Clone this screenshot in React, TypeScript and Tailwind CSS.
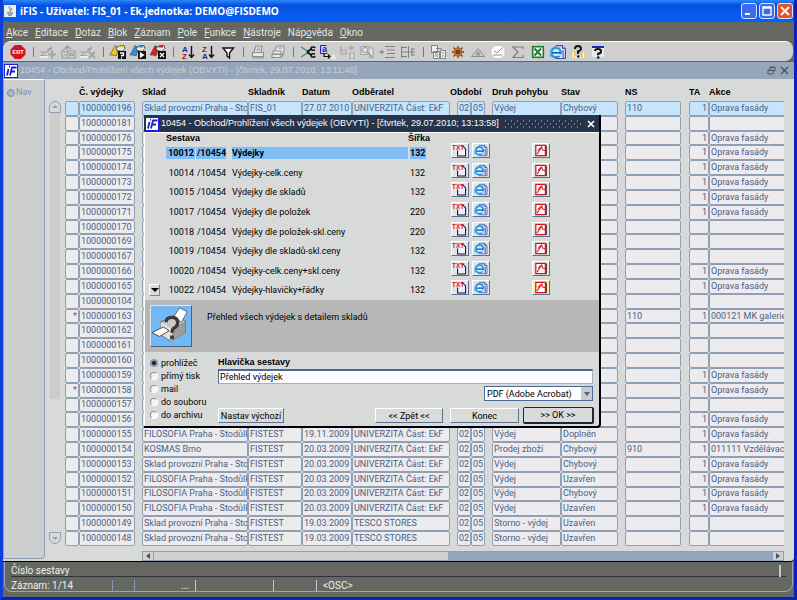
import { useState } from "react";
import type { ReactNode } from "react";

type Row = {
  id: string;
  mark?: string;
  store?: string;
  keeper?: string;
  date?: string;
  customer?: string;
  month?: string;
  year?: string;
  kind?: string;
  state?: string;
  ns?: string;
  ta?: string;
  action?: string;
};

const repair = { ta: "1", action: "Oprava fasády" };
const period = { month: "02", year: "05" };
const filosofia = {
  store: "FILOSOFIA Praha - Stodůlk",
  keeper: "FISTEST",
  customer: "UNIVERZITA Část: EkF",
  ...period,
};
const warehouse = {
  store: "Sklad provozní Praha - Stod",
  keeper: "FISTEST",
  customer: "UNIVERZITA Část: EkF",
  ...period,
};

const rows: Row[] = [
  { id: "1000000196", ...warehouse, keeper: "FIS_01", date: "27.07.2010", kind: "Výdej", state: "Chybový", ns: "110", ...repair },
  { id: "1000000181" },
  { id: "1000000176", ...repair },
  { id: "1000000175", ...repair },
  { id: "1000000174", ...repair },
  { id: "1000000173", ...repair },
  { id: "1000000172", ...repair },
  { id: "1000000171", ...repair },
  { id: "1000000170" },
  { id: "1000000169" },
  { id: "1000000167" },
  { id: "1000000166", ...repair },
  { id: "1000000165", ...repair },
  { id: "1000000104" },
  { id: "1000000163", mark: "*", ns: "110", ta: "1", action: "000121 MK galerie" },
  { id: "1000000162" },
  { id: "1000000161" },
  { id: "1000000160" },
  { id: "1000000159", ...repair },
  { id: "1000000158", mark: "*", ...repair },
  { id: "1000000157" },
  { id: "1000000156", ...repair },
  { id: "1000000155", ...filosofia, date: "19.11.2009", kind: "Výdej", state: "Doplněn", ...repair },
  { id: "1000000154", ...warehouse, store: "KOSMAS Brno", date: "20.03.2009", kind: "Prodej zboží", state: "Chybový", ns: "910", ta: "1", action: "011111 Vzdělávací" },
  { id: "1000000153", ...warehouse, date: "20.03.2009", kind: "Výdej", state: "Chybový", ...repair },
  { id: "1000000152", ...filosofia, date: "20.03.2009", kind: "Výdej", state: "Uzavřen", ...repair },
  { id: "1000000151", ...filosofia, date: "20.03.2009", kind: "Výdej", state: "Chybový", ...repair },
  { id: "1000000150", ...filosofia, date: "20.03.2009", kind: "Výdej", state: "Uzavřen", ...repair },
  { id: "1000000149", ...warehouse, customer: "TESCO STORES", date: "19.03.2009", kind: "Storno - výdej", state: "Uzavřen" },
  { id: "1000000148", ...warehouse, customer: "TESCO STORES", date: "19.03.2009", kind: "Storno - výdej", state: "Uzavřen" },
];

const reports = [
  { code: "10012", name: "Výdejky", width: 132 },
  { code: "10014", name: "Výdejky-celk.ceny", width: 132 },
  { code: "10015", name: "Výdejky dle skladů", width: 132 },
  { code: "10017", name: "Výdejky dle položek", width: 220 },
  { code: "10018", name: "Výdejky dle položek-skl.ceny", width: 220 },
  { code: "10019", name: "Výdejky dle skladů-skl.ceny", width: 132 },
  { code: "10020", name: "Výdejky-celk.ceny+skl.ceny", width: 132 },
  { code: "10022", name: "Výdejky-hlavičky+řádky", width: 132 },
];

// [before, underlined letter, after]
const menu = [
  ["", "A", "kce"],
  ["", "E", "ditace"],
  ["", "D", "otaz"],
  ["", "B", "lok"],
  ["", "Z", "áznam"],
  ["", "P", "ole"],
  ["", "F", "unkce"],
  ["", "N", "ástroje"],
  ["Náp", "o", "věda"],
  ["", "O", "kno"],
];

const Logo = () => (
  <svg viewBox="0 0 14 14" className="size-[14px] shrink-0" aria-hidden="true">
    <rect x="0.5" y="0.5" width="13" height="13" fill="#fff" stroke="#1a22e0" />
    <path d="M4.5 5 3 11.5M5 2.5h1" stroke="#1a22c8" strokeWidth="1.8" fill="none" />
    <path d="M6 11.5 8 3.5h4.5M7 7.5h4" stroke="#1a22c8" strokeWidth="1.8" fill="none" />
  </svg>
);

const BrowserIcon = () => (
  <g>
    <path d="M8 1.500h6.500l3 3v10H8z" fill="#eef2ff" stroke="#3b4f9c" />
    <path d="M14.500 1.500v3h3" fill="#9fb2ec" stroke="#3b4f9c" />
    <path d="M15.300 6v8" stroke="#6c86d8" strokeWidth="2" />
    <circle cx="8" cy="8.500" r="4.800" fill="#d9f0ff" stroke="#2a94e4" strokeWidth="2.400" />
    <path d="M4 8.800h8.500" stroke="#1668b8" strokeWidth="1.800" />
    <path d="M10 11h4" stroke="#eef2ff" strokeWidth="1.400" />
    <path d="M2 13C1 8 9 1.500 14 3" stroke="#4db4f0" fill="none" />
  </g>
);

// pencil and sheet shared by the three record tools
const Pen = ({ children }: { children: ReactNode }) => (
  <g fill="none" stroke="#a2a4a2" strokeWidth="1.2">
    <path d="M2 8h7l5-4M2 11.500h7M4 10l4-2M9 6l5-3" />
    <path d="M2 13h8" stroke="#fff" />
    {children}
  </g>
);

const Query = ({ color, sign }: { color: string; sign: ReactNode }) => (
  <g>
    <path d="M2 11 7 1.500 11 4 8 12l-3-1z" fill={color} stroke="#555" strokeWidth="0.7" />
    <path d="M8 4 12 1.500h4l1 3-3 3-5-1z" fill="#e8e8e0" stroke="#333" strokeWidth="0.8" />
    <path d="M11 2.500h4" stroke={color} strokeWidth="2" />
    <rect x="10" y="7" width="8" height="8" fill="#111" />
    <g stroke="#fff" strokeWidth="1.3" fill="none">
      {sign}
    </g>
  </g>
);

const Sort = ({ top, bottom, topColor, bottomColor }: { top: string; bottom: string; topColor: string; bottomColor: string }) => (
  <g>
    <text x="4" y="7.500" fontSize="8" fontWeight="bold" fill={topColor}>
      {top}
    </text>
    <text x="4" y="15" fontSize="8" fontWeight="bold" fill={bottomColor}>
      {bottom}
    </text>
    <path d="M13.500 2v11M11 10.500l2.500 3 2.500-3" stroke="#111" strokeWidth="1.4" fill="none" />
  </g>
);

const tools: { label: string; icon: ReactNode }[][] = [
  [
    {
      label: "Exit",
      icon: (
        <g>
          <path d="M7 1h6l4.500 4.500v5L13 15H7L2.500 10.500v-5z" fill="#d8121c" />
          <text x="10" y="10" fontSize="5" fontWeight="bold" fill="#fff" textAnchor="middle">
            EXIT
          </text>
        </g>
      ),
    },
  ],
  [
    { label: "Vložit záznam", icon: <Pen><path d="M14 6.500v8M10 10.500h8" strokeWidth="2" /></Pen> },
    {
      label: "Uložit záznam",
      icon: (
        <g fill="none" stroke="#9c9e9c" strokeWidth="1.2">
          <path d="M3 9 9 2l4 3M4 8.500V14h5M9 2v4M6 8h4M6 11h3" />
          <path d="M10 7h7v7h-7zM12 9.500h3v2h-3z" />
        </g>
      ),
    },
    { label: "Smazat záznam", icon: <Pen><path d="m11 8 6 6M17 8l-6 6" strokeWidth="1.800" /></Pen> },
  ],
  [
    { label: "Zadat dotaz", icon: <Query color="#f5c518" sign={<path d="M12 9h3.500v2.500h-2v1M13 14h1" />} /> },
    { label: "Provést dotaz", icon: <Query color="#2a8fe8" sign={<path d="m12.500 9 3 2-3 2z" fill="#fff" />} /> },
    { label: "Zrušit dotaz", icon: <Query color="#e01c1c" sign={<path d="m12 9 4 4M16 9l-4 4" />} /> },
  ],
  [
    { label: "Třídit vzestupně", icon: <Sort top="A" bottom="Z" topColor="#1a2a8c" bottomColor="#a01820" /> },
    { label: "Třídit sestupně", icon: <Sort top="Z" bottom="A" topColor="#a01820" bottomColor="#1a2a8c" /> },
    { label: "Filtr", icon: <path d="M5 4h10.500l-4 5v5l-2.500-2V9z" fill="#fff" stroke="#111" strokeWidth="1.4" /> },
  ],
  [
    {
      label: "Tisk",
      icon: (
        <g stroke="#8c8e8c" fill="#e8e8e8" strokeWidth="1.100">
          <path d="m6 8 2-6h6l-1 6M9 4h3M8 6h4" />
          <path d="M4.500 8.500h11v4h-11zM4.500 14h11" />
        </g>
      ),
    },
    {
      label: "Tisk sestavy",
      icon: (
        <g stroke="#8c8e8c" fill="#e8e8e8" strokeWidth="1.100">
          <path d="M7 6 9 2h7v5l-2 4" />
          <path d="M5 7h8v3H5zM4 10.500h9v3H4zM13 13.500l3-4" />
          <path d="M10 4h4" />
        </g>
      ),
    },
  ],
  [
    {
      label: "Vyjmout",
      icon: (
        <g fill="none">
          <path d="m3 3 8 5-8 5" stroke="#3c8c8c" strokeWidth="1.4" />
          <path d="m9 8 5-3.500M9 8l5 3.500" stroke="#111" strokeWidth="1.800" />
          <path d="M17.500 3.500Q13 2 13 4.500t4 1.500M17.500 12.500q-4.500 1.500-4.500-1t4-1.500" stroke="#111" strokeWidth="1.600" />
        </g>
      ),
    },
    {
      label: "Kopírovat",
      icon: (
        <g>
          <text x="4" y="7.500" fontSize="9" fontWeight="bold" fill="#2222c8">a</text>
          <path d="M2.500 1.500v8h7M2.500 1.500h6" stroke="#2222c8" fill="none" />
          <path d="M6 9v3.500h6m-2-2 2 2-2 2" stroke="#111" fill="none" strokeWidth="1.200" />
          <text x="13" y="14.500" fontSize="8" fill="#fff">a</text>
        </g>
      ),
    },
    {
      label: "Vložit",
      icon: (
        <g stroke="#a4a6a4" fill="none" strokeWidth="1.200">
          <path d="M3 2v8h5V6H3M9 4h5m-2-2 3 2-3 2" />
          <path d="M12 8v6h4V9h-4" fill="#e4e4e4" />
        </g>
      ),
    },
    {
      label: "Hledat",
      icon: (
        <g stroke="#a4a6a4" fill="none" strokeWidth="1.200">
          <path d="M3 2.500h8v8H3zM11 4h4v9h-5" fill="#e8e8e8" />
          <circle cx="7" cy="6" r="2.600" />
          <path d="m9 8 6 6" strokeWidth="2" />
        </g>
      ),
    },
    {
      label: "Seznam hodnot",
      icon: <path d="M7 2.500h10M9 6h8M9 9.500h8M7 13.500h10M1 8h5M4 6v4" stroke="#808280" fill="none" strokeWidth="1.200" />,
    },
    {
      label: "Strom",
      icon: <path d="M3.500 2v12M3 3.500h6M3 8h9M3 12.500h6M10.500 2v12M13 5h4M12 8h5M13 11h4M14 4v8" stroke="#808280" fill="none" />,
    },
  ],
  [
    {
      label: "Kopie záznamu",
      icon: (
        <g stroke="#808280" fill="#f0f0f0">
          <path d="M3.500 1.500h6v7h-6zM5.500 7.500h6v7h-6zM12.500 6.500h5v8h-5z" />
          <path d="M8 4.500h5v2M7 10h3M7 12h3M14 9h2M14 12h2" />
        </g>
      ),
    },
    {
      label: "Kormidlo",
      icon: (
        <g fill="none" stroke="#7a3c10" strokeWidth="1.300">
          <path d="M10 2v12M4 8h12M5.500 3.500l9 9M14.500 3.500l-9 9" />
          <circle cx="10" cy="8" r="3.800" stroke="#b86820" />
          <circle cx="10" cy="8" r="1" fill="#f0b060" />
        </g>
      ),
    },
    {
      label: "Upozornění",
      icon: (
        <g fill="none" stroke="#8c8e8c">
          <path d="m3.500 12.500 6.500-8 6.500 8z" />
          <path d="m8 11 2-4 2 4zM8 10h4" />
        </g>
      ),
    },
    {
      label: "Hodiny",
      icon: (
        <g>
          <path d="M7 1.500h6l4 4v5l-4 4H7l-4-4v-5z" fill="#fff" stroke="#c4c4c4" />
          <path d="m6 7 3 2 5-5M5 11h9" stroke="#8c8e8c" fill="none" />
        </g>
      ),
    },
    { label: "Součet", icon: <path d="M15 5V3H5l5 5-5 5.500h10V11" stroke="#7c7e7c" fill="none" strokeWidth="1.200" /> },
    {
      label: "Excel",
      icon: (
        <g>
          <rect x="4.700" y="2.700" width="10.600" height="10.600" fill="#fff" stroke="#1c7c2c" strokeWidth="1.600" />
          <path d="m6.500 4.500 6.500 7M13 4.500l-6.500 7" stroke="#1c7c2c" strokeWidth="2" />
        </g>
      ),
    },
    { label: "Prohlížeč", icon: <BrowserIcon /> },
    {
      label: "Nápověda k poli",
      icon: (
        <g>
          <path d="M3 8h4v6H3zM13 9h4v5h-4z" fill="#f5c040" />
          <path d="M5 8v6M15.500 9v5M7 13h6" stroke="#fff" strokeWidth="1.500" />
          <path d="M7 5q0-3 3-3t3 2.500q0 2-3 3V10M9 12.500h2.500" stroke="#111" strokeWidth="2" fill="none" />
        </g>
      ),
    },
    {
      label: "Nápověda k oknu",
      icon: (
        <g>
          <path d="M4 3h12v10H4z" fill="#e8e8f0" />
          <path d="M4 3h12" stroke="#1a22c8" strokeWidth="2" />
          <path d="M7 7q0-2 3-2t3 2.200-3 2.600v1.400M9 13.500h2.500" stroke="#111" strokeWidth="2" fill="none" />
        </g>
      ),
    },
  ],
];

const Arrow = ({ d }: { d: string }) => (
  <svg viewBox="0 0 8 8" className="size-2" aria-hidden="true">
    <path d={d} fill="currentColor" />
  </svg>
);

const Cell = ({ children, active, right, open }: { children?: ReactNode; active?: boolean; right?: boolean; open?: boolean }) => (
  <td
    className={`overflow-hidden whitespace-nowrap rounded-[2px] border border-[#8f9fb4] px-px py-0 align-middle ${
      active ? "bg-[#c6e5fc]" : "bg-[#edebed]"
    } ${right ? "text-right" : ""} ${open ? "rounded-r-none border-r-0" : ""}`}
  >
    {children}
  </td>
);

const Gap = () => <td className="p-0" />;

const DataTable = () => (
  <table className="h-[462px] w-full table-fixed border-separate border-spacing-0 text-[9px] leading-[11px] text-[#4a6285]">
    <colgroup>
      <col className="w-[14px]" />
      <col className="w-[56px]" />
      <col className="w-[7px]" />
      <col className="w-[106px]" />
      <col className="w-[54px]" />
      <col className="w-[50px]" />
      <col className="w-[98px]" />
      <col className="w-[7px]" />
      <col className="w-[14px]" />
      <col className="w-[14px]" />
      <col className="w-[7px]" />
      <col className="w-[69px]" />
      <col className="w-[57px]" />
      <col className="w-[7px]" />
      <col className="w-[56px]" />
      <col className="w-[8px]" />
      <col className="w-[20px]" />
      <col />
    </colgroup>
    <thead className="text-left font-['Liberation_Sans',sans-serif] text-black">
      <tr className="h-[17px] whitespace-nowrap">
        <th />
        <th>Č. výdejky</th>
        <th />
        <th>Sklad</th>
        <th>Skladník</th>
        <th>Datum</th>
        <th>Odběratel</th>
        <th colSpan={4}>Období</th>
        <th>Druh pohybu</th>
        <th>Stav</th>
        <th />
        <th>NS</th>
        <th />
        <th>TA</th>
        <th>Akce</th>
      </tr>
    </thead>
    <tbody>
      {rows.map((row, i) => {
        const active = i === 0;
        return (
          <tr key={row.id}>
            <Cell active={active} right>{row.mark}</Cell>
            <Cell active={active}>{row.id}</Cell>
            <Gap />
            <Cell active={active}>{row.store}</Cell>
            <Cell active={active}>{row.keeper}</Cell>
            <Cell active={active}>{row.date}</Cell>
            <Cell active={active}>{row.customer}</Cell>
            <Gap />
            <Cell active={active}>{row.month}</Cell>
            <Cell active={active}>{row.year}</Cell>
            <Gap />
            <Cell active={active}>{row.kind}</Cell>
            <Cell active={active}>{row.state}</Cell>
            <Gap />
            <Cell active={active}>{row.ns}</Cell>
            <Gap />
            <Cell active={active} right>{row.ta}</Cell>
            <Cell active={active} open>{row.action}</Cell>
          </tr>
        );
      })}
    </tbody>
  </table>
);

const FormatButton = ({ label, marked, children }: { label: string; marked?: boolean; children: ReactNode }) => (
  <button
    type="button"
    aria-label={label}
    className={`block h-[15px] w-[18px] border border-t-white border-l-white border-r-[#5a6f94] border-b-[#5a6f94] ${
      marked ? "bg-[#f7f08a]" : "bg-[#e4e6e6]"
    }`}
  >
    <svg viewBox="0 0 20 16" className="size-full font-['Liberation_Sans',sans-serif]">{children}</svg>
  </button>
);

const ReportList = ({ selected, onSelect }: { selected: number; onSelect: (i: number) => void }) => (
  <table className="h-[167px] w-full table-fixed border-separate border-spacing-0 text-left text-[9px] leading-3">
    <colgroup>
      <col className="w-[21px]" />
      <col className="w-[29px]" />
      <col className="w-[37px]" />
      <col className="w-[176px]" />
      <col className="w-[43px]" />
      <col className="w-[21px]" />
      <col className="w-[60px]" />
      <col />
    </colgroup>
    <thead className="font-['Liberation_Sans',sans-serif]">
      <tr className="h-[10px] whitespace-nowrap leading-[10px]">
        <th />
        <th colSpan={3}>Sestava</th>
        <th colSpan={4}>Šířka</th>
      </tr>
    </thead>
    <tbody>
      {reports.map((report, i) => {
        const hit = i === selected ? "bg-[#7fbdf8] font-bold" : "";
        return (
          <tr key={report.code} className="align-top" onClick={() => onSelect(i)}>
            <td className="pt-1">
              {i === reports.length - 1 && (
                <button
                  type="button"
                  aria-label="Další sestavy"
                  className="ml-1 flex h-3 w-[11px] items-center justify-center border border-t-white border-l-white border-r-[#7c8494] border-b-[#7c8494]"
                >
                  <Arrow d="M0 2h8L4 6z" />
                </button>
              )}
            </td>
            <td className="pt-1">
              <div className={`${hit} h-3 pr-px text-right`}>{report.code}</div>
            </td>
            <td className="pt-1 pr-[6px] pl-px">
              <div className={`${hit} h-3 pl-px`}>/10454</div>
            </td>
            <td className="pt-1">
              <div className={`${hit} h-3 whitespace-nowrap`}>{report.name}</div>
            </td>
            <td className="pt-1 pl-[2px]">
              <div className={`${hit} h-3 w-4`}>{report.width}</div>
            </td>
            <td>
              <FormatButton label="TXT">
                <path d="M7 8v7h10V6l-3-3h-2" fill="#eef" stroke="#111" strokeWidth="1.3" />
                <text x="0" y="7" fontSize="8" fontWeight="bold" fill="#e01818">TXT</text>
              </FormatButton>
            </td>
            <td>
              <FormatButton label="HTML">
                <BrowserIcon />
              </FormatButton>
            </td>
            <td>
              <FormatButton label="PDF" marked={i === reports.length - 1}>
                <path d="M3.500 1.500h12v13h-12z" fill="#fff" stroke="#d01820" strokeWidth="1.600" />
                <path d="M16.800 2v13" stroke="#3a1010" />
                <path d="m5 12.500 6-9 1 4 5 1M6 8q3-4 5-4.500" stroke="#e01c24" strokeWidth="1.300" fill="none" />
              </FormatButton>
            </td>
          </tr>
        );
      })}
    </tbody>
  </table>
);

const buttonStyle =
  "h-[15px] border border-t-white border-l-white border-r-[#5a6f94] border-b-[#5a6f94] bg-[#d9dbda] text-center leading-3 whitespace-nowrap";

const outputs = ["prohlížeč", "přímý tisk", "mail", "do souboru", "do archivu"];

const ReportDialog = () => {
  const [selected, setSelected] = useState(0);
  const [output, setOutput] = useState(outputs[0]);
  const [title, setTitle] = useState("Přehled výdejek");

  return (
    <div
      role="dialog"
      aria-labelledby="report-title"
      className="absolute top-[36px] left-[141px] w-[457px] rounded-br border-r-2 border-b-2 border-black bg-[#d8dad9] text-[9px] text-black"
    >
      <div className="flex h-[17px] items-center gap-[2px] bg-[#26344b] pr-1 pl-px text-white">
        <Logo />
        <h2 id="report-title" className="font-['Liberation_Sans',sans-serif] whitespace-nowrap">
          10454 - Obchod/Prohlížení všech výdejek (OBVYTI) - [čtvrtek, 29.07.2010; 13:13:58]
        </h2>
        <svg className="mx-1 h-2 min-w-0 flex-1" aria-hidden="true">
          <defs>
            <pattern id="grip" width="6" height="6" patternUnits="userSpaceOnUse">
              <path d="M0 1h1M3 4h1" stroke="#c4ccd8" />
              <path d="M1 2h1M4 5h1" stroke="#0c1420" />
            </pattern>
          </defs>
          <rect width="100%" height="8" fill="url(#grip)" />
        </svg>
        <button type="button" aria-label="Zavřít" className="shrink-0">
          <svg viewBox="0 0 8 8" className="size-2">
            <path d="m1 1 6 6M7 1 1 7" stroke="#fff" strokeWidth="1.600" />
          </svg>
        </button>
      </div>
      <div className="border-t border-l border-white">
        <ReportList selected={selected} onSelect={setSelected} />
        <div className="flex h-[52px] items-center gap-[15px] bg-[#b7b7b8] pl-[5px]">
          <svg viewBox="0 0 42 42" className="size-[42px] border border-t-[#d8e8f8] border-l-[#d8e8f8] border-r-[#4a6285] border-b-[#4a6285] bg-[#72b8f4]" aria-hidden="true">
            <path d="M10 17 27 9l9 7v12L21 37l-11-7z" fill="#c9c9c9" stroke="#555" />
            <path d="m10 17 12 7v13l-12-7z" fill="#e2e2e2" />
            <path d="m22 24 14-8v12l-14 9z" fill="#9c9c9c" />
            <path d="m24 11 6-9 8 4-6 11z" fill="#fff" stroke="#666" />
            <path d="m1 28 12-6 6 4-10 6z" fill="#fff" stroke="#444" />
            <path d="M16 17q0-5 6-5t6 5.500q0 3.500-3.500 5.500-2.500 1.500-2.500 5" fill="none" stroke="#3a3a3a" strokeWidth="3.500" />
            <path d="M20 33h4" stroke="#3a3a3a" strokeWidth="4" />
          </svg>
          <p className="pb-4">Přehled všech výdejek s detailem skladů</p>
        </div>
        <form className="flex h-[74px] pt-1 pr-[6px] pl-[5px]" onSubmit={(e) => e.preventDefault()}>
          <fieldset className="flex w-[68px] flex-col">
            {outputs.map((name) => (
              <label key={name} className="flex h-[13px] items-center gap-[3px] whitespace-nowrap leading-3">
                <input
                  type="radio"
                  name="output"
                  checked={output === name}
                  onChange={() => setOutput(name)}
                  className="size-2 appearance-none rounded-full border border-[#8c94a0] border-r-white border-b-white bg-[#f4f6f6] checked:border-2 checked:border-[#8c94a0] checked:bg-[#101c30]"
                />
                {name}
              </label>
            ))}
          </fieldset>
          <div className="flex min-w-0 flex-1 flex-col">
            <label htmlFor="report-heading" className="h-[13px] font-['Liberation_Sans',sans-serif] leading-3 font-bold">
              Hlavička sestavy
            </label>
            <input
              id="report-heading"
              value={title}
              onChange={(e) => setTitle(e.target.value)}
              className="h-[15px] border-t-2 border-l border-r border-b border-t-[#4a6a98] border-l-[#4a6a98] border-r-[#a8b0b8] border-b-[#a8b0b8] bg-[#fdfbfd] px-px"
            />
            <div className="mt-[2px] ml-auto flex h-[15px] w-[109px] border border-[#4a6a98] bg-white">
              <select aria-label="Formát výstupu" className="min-w-0 flex-1 appearance-none pl-[2px] leading-3">
                <option>PDF (Adobe Acrobat)</option>
              </select>
              <span className="flex w-[11px] items-center justify-center bg-[#c8ccd0] text-[#4a6285]">
                <Arrow d="M1 2h6L4 6z" />
              </span>
            </div>
            <div className="mt-[6px] -mr-px flex items-center">
              <button type="button" className={`${buttonStyle} w-[66px]`}>Nastav výchozí</button>
              <button type="button" className={`${buttonStyle} ml-auto w-[68px]`}>&lt;&lt; Zpět &lt;&lt;</button>
              <button type="button" className={`${buttonStyle} ml-[7px] w-[69px]`}>Konec</button>
              <button type="submit" className="ml-1 h-[17px] w-[71px] rounded-[2px] border-2 border-t border-l border-[#1c2636] bg-[#d9dbda] leading-3">
                &gt;&gt; OK &gt;&gt;
              </button>
            </div>
          </div>
        </form>
      </div>
    </div>
  );
};

const windowButton = "flex size-4 items-center justify-center rounded-[3px] border border-[#d8e4fc]";

export default function App() {
  return (
    <div className="flex min-h-screen flex-col overflow-hidden border-x-3 border-b-3 border-[#0a3fdc] border-r-[#0a22b8] border-b-[#0a22b8] bg-[#666761] font-[Roboto,sans-serif] text-[9px]">
      <header className="flex h-[22px] shrink-0 items-center gap-1 bg-linear-to-b from-[#2c86f8] via-[#0850e0] via-25% to-[#0462f8] pr-px pl-px text-white">
        <svg viewBox="0 0 12 12" className="size-3" aria-hidden="true">
          <rect width="12" height="12" fill="#e8eef4" />
          <path d="M6 1q-2 2 0 3t-1 3M8 3q-1 1-1 3" stroke="#e06820" fill="none" />
          <path d="M3 8h6M4 10h4" stroke="#3a5c90" strokeWidth="1.200" />
        </svg>
        <h1 className="flex-1 truncate font-['Open_Sans',sans-serif] text-[10px] font-bold">
          iFIS - Uživatel: FIS_01 - Ek.jednotka: DEMO@FISDEMO
        </h1>
        <div className="flex gap-[2px]">
          <button type="button" aria-label="Minimalizovat" className={`${windowButton} bg-[#3a6cec]`}>
            <svg viewBox="0 0 10 10" className="size-[10px]"><path d="M1 8h5" stroke="#fff" strokeWidth="2" /></svg>
          </button>
          <button type="button" aria-label="Maximalizovat" className={`${windowButton} bg-[#3a6cec]`}>
            <svg viewBox="0 0 10 10" className="size-[10px]">
              <path d="M1 1h8v8H1zM1 2h8" fill="none" stroke="#fff" strokeWidth="1.300" />
            </svg>
          </button>
          <button type="button" aria-label="Zavřít aplikaci" className={`${windowButton} bg-[#e2522c]`}>
            <svg viewBox="0 0 10 10" className="size-[10px]"><path d="m1 1 8 8M9 1 1 9" stroke="#fff" strokeWidth="1.800" /></svg>
          </button>
        </div>
      </header>

      <nav className="flex h-[19px] shrink-0 items-center gap-[7px] pt-px pl-[3px] text-[10px] text-[#e4e4e0]">
        {menu.map(([before, key, after]) => (
          <button type="button" key={before + key + after}>
            {before}
            <u>{key}</u>
            {after}
          </button>
        ))}
      </nav>

      <div className="mr-px flex h-5 shrink-0 items-center rounded-tl-lg rounded-r-lg border-t border-white bg-[#cfcfcf] pl-[5px]">
        {tools.map((group, g) => (
          <div key={g} className="flex items-center">
            {g > 0 && (
              <span className="flex w-[10px] justify-center">
                <span className="h-[10px] w-px bg-[#5c7ca8]" />
              </span>
            )}
            {group.map((tool) => (
              <button type="button" key={tool.label} aria-label={tool.label} className="h-4 w-5">
                <svg viewBox="0 0 20 16" className="size-full font-['Liberation_Sans',sans-serif]">{tool.icon}</svg>
              </button>
            ))}
          </div>
        ))}
      </div>

      <main className="relative flex flex-1 flex-col rounded-br border-b border-black bg-[#d8dad9]">
        <div className="flex h-[18px] shrink-0 items-center gap-[2px] border-t border-[#5c6470] bg-[#96a6ba] pr-[5px] pl-px text-[#c9cdd2]">
          <Logo />
          <h2 className="flex-1 font-['Liberation_Sans',sans-serif]">
            10454 - Obchod/Prohlížení všech výdejek (OBVYTI) - [čtvrtek, 29.07.2010, 13:11:46]
          </h2>
          <button type="button" aria-label="Obnovit okno" className="text-[#55575a]">
            <svg viewBox="0 0 9 9" className="size-[9px]">
              <path d="M3 3V1h5v4H6M1 4h5v4H1zM3 1.500h5M1 4.500h5" fill="none" stroke="currentColor" />
            </svg>
          </button>
          <button type="button" aria-label="Zavřít okno" className="ml-[2px] text-[#55575a]">
            <svg viewBox="0 0 9 9" className="size-[9px]">
              <path d="m1 1 7 7M8 1 1 8" stroke="currentColor" strokeWidth="1.600" />
            </svg>
          </button>
        </div>

        <div className="relative flex min-h-0 flex-1">
          <aside className="mb-[2px] w-[42px] rounded-br border border-l-[#8f9fb4] border-t-white border-r-[#8f9fb4] border-b-[#8f9fb4] bg-[#cdcfce] pt-[6px] pl-[3px] text-[#7c90ac]">
            <label className="flex items-center gap-px">
              <input type="radio" name="nav" className="size-2 appearance-none rounded-full border border-[#7c90ac] bg-[#a8b4c4]" />
              Nav
            </label>
          </aside>

          <div className="flex w-[20px] flex-col items-center pt-[22px] pb-[17px] text-[#8f9fb4]">
            <button type="button" aria-label="Nahoru" className="flex h-3 w-3 items-center justify-center rounded-t-md border border-[#8f9fb4]">
              <Arrow d="M1 5h6L4 2z" />
            </button>
            <div className="h-[286px] w-[10px] bg-[#cbcccb]" />
            <button type="button" aria-label="Dolů" className="mt-auto flex h-3 w-3 items-center justify-center rounded-b-md border border-[#8f9fb4]">
              <Arrow d="M1 3h6L4 6z" />
            </button>
          </div>

          <div className="flex min-w-0 flex-1 flex-col pt-[5px] pr-[10px]">
            <DataTable />
            <div className="mt-auto ml-[77px] flex h-[10px] border border-[#8f9fb4] bg-[#94a6bc] text-[#3c5478]">
              <button type="button" aria-label="Vlevo" className="flex w-[11px] items-center justify-center border-r border-[#8f9fb4] bg-[#d0d2d2]">
                <Arrow d="M6 1v6L2 4z" />
              </button>
              <div className="w-[46%] bg-[#cfd1d0]" />
              <button type="button" aria-label="Vpravo" className="ml-auto flex w-[10px] items-center justify-center bg-[#d0d2d2]">
                <Arrow d="M2 1v6l4-3z" />
              </button>
            </div>
          </div>

          {/* left/top are measured from the workspace below the form title */}
          <ReportDialog />
        </div>
      </main>

      <footer className="mx-px mb-[5px] shrink-0 rounded-b-lg border-x border-b border-[#a4a4b0] px-[6px] text-[10px] leading-[14px] text-[#f0f0ec]">
        <div className="flex h-[15px] items-center border-b border-[#2c3440] pt-[3px] pr-[5px]">
          <span className="flex-1">Číslo sestavy</span>
          <span className="h-3 border-l-2 border-[#c4c8d0]" />
        </div>
        <div className="flex h-[14px] items-center pt-[3px]">
          <span className="w-[101px]">Záznam: 1/14</span>
          <span className="h-[11px] w-[22px] border-l border-[#8c98b0]" />
          <span className="flex h-[11px] w-[61px] items-center justify-end border-l border-[#8c98b0] pr-[6px]">...</span>
          <span className="h-[11px] w-[78px] border-l border-[#c4c8d0]" />
          <span className="h-[11px] w-[43px] border-l border-[#c4c8d0]" />
          <span className="flex h-[11px] items-center border-l border-[#c4c8d0] pl-[6px]">&lt;OSC&gt;</span>
        </div>
      </footer>
    </div>
  );
}
